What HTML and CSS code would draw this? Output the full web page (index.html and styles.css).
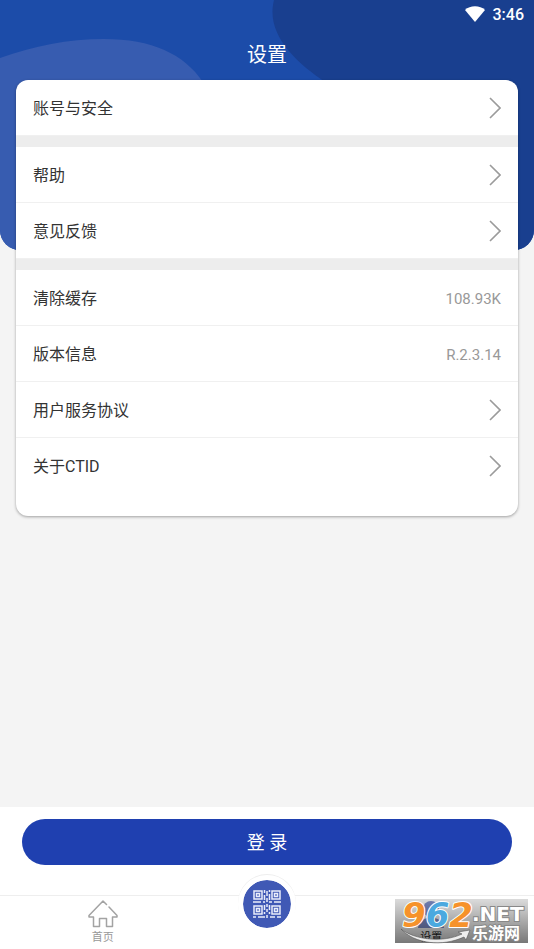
FILE: index.html
```html
<!DOCTYPE html>
<html lang="zh-CN">
<head>
<meta charset="utf-8">
<meta name="viewport" content="width=device-width, initial-scale=1">
<title>设置</title>
<link rel="stylesheet" href="styles.css">
</head>
<body>
<svg class="defs" aria-hidden="true">
  <symbol id="chevron" viewBox="0 0 12 22"><path d="M1 1 11 11 1 21" fill="none" stroke="#9b9b9b" stroke-width="1.6"/></symbol>
</svg>

<header class="hero">
  <svg class="hero-art" viewBox="0 0 534 250" preserveAspectRatio="none" aria-hidden="true">
    <path d="M0 58C34 46 68 39 104 39C152 39 184 54 203 82C222 112 210 170 230 250H0Z" fill="#375cb0"/>
    <path d="M274 0C269 20 277 36 288 50C300 64 312 73 325 82C360 108 400 170 410 250H534V0Z" fill="#193f8f"/>
  </svg>
  <div class="status">
    <svg class="wifi" viewBox="0 0 20 16" aria-label="Wi-Fi"><path d="M0 4C5-1 15-1 20 4L10 16Z" fill="#fff"/></svg>
    <time class="label">3:46</time>
  </div>
  <h1 class="title">设置</h1>
</header>

<main class="content">
  <div class="card">
    <ul class="group">
      <li><a class="row" href="#account"><span class="label">账号与安全</span><svg class="chevron"><use href="#chevron"/></svg></a></li>
    </ul>
    <ul class="group">
      <li><a class="row" href="#help"><span class="label">帮助</span><svg class="chevron"><use href="#chevron"/></svg></a></li>
      <li><a class="row" href="#feedback"><span class="label">意见反馈</span><svg class="chevron"><use href="#chevron"/></svg></a></li>
    </ul>
    <ul class="group">
      <li><a class="row" href="#cache"><span class="label">清除缓存</span><span class="label value">108.93K</span></a></li>
      <li><a class="row" href="#version"><span class="label">版本信息</span><span class="label value">R.2.3.14</span></a></li>
      <li><a class="row" href="#terms"><span class="label">用户服务协议</span><svg class="chevron"><use href="#chevron"/></svg></a></li>
      <li><a class="row" href="#about"><span class="label">关于CTID</span><svg class="chevron"><use href="#chevron"/></svg></a></li>
    </ul>
  </div>
</main>

<footer class="bottom">
  <div class="login-bar"><button class="login" type="button">登 录</button></div>
  <nav class="tabs">
    <a class="tab" href="#home">
      <svg class="tab-icon" viewBox="0 0 30 28" fill="none" stroke="#a3a3a3" stroke-width="1.5" stroke-linejoin="round" stroke-linecap="round" aria-hidden="true"><path d="M18.5 4.5 15 1 1 15.500V17H5.500V26.500H11.500V18.500H18.500V26.500H24.500V17H29V15.500L21 7"/></svg>
      <span>首页</span>
    </a>
    <a class="scan" href="#code" aria-label="二维码">
      <svg class="qr" viewBox="0 0 28 28" fill="none" stroke="#e9edfa" stroke-width="1.5" aria-hidden="true">
        <path d="M1 1H9V9H1ZM19 1H27V9H19ZM1 16H9V24H1ZM19 16H27V24H19Z"/>
        <path d="M3.500 3.500H6.500V6.500H3.500ZM21.500 3.500H24.500V6.500H21.500ZM3.500 18.500H6.500V21.500H3.500ZM21.500 18.500H24.500V21.500H21.500Z"/>
        <path d="M11.500 0V3M11.500 5V10M14 1V6M16.500 0V2M16.500 4V10M14 8V10M0 12H8M10 12H12M13 11H15M16 12H19M21 12H28M11.500 15V20M14 14V17M16.500 15V20M14 19V22M11.500 22V24M16.500 22V24M0 27H3M5 27H12M14 25V28M17 27H22M24 27H28"/>
      </svg>
    </a>
    <a class="tab tab-active" href="#settings">
      <svg class="tab-icon" viewBox="0 0 30 28" fill="#8492cf" aria-hidden="true"><circle cx="15" cy="9" r="8"/><path d="M2 28C3 14 27 14 28 28Z"/></svg>
      <span>设置</span>
    </a>
  </nav>
  <svg class="watermark" viewBox="0 0 133 44" role="img" aria-label="962.NET 乐游网">
    <defs><linearGradient id="shade" x2="0" y2="1"><stop stop-color="#000" stop-opacity=".14"/><stop offset="1" stop-color="#000" stop-opacity=".53"/></linearGradient></defs>
    <rect width="133" height="44" fill="url(#shade)"/>
    <path d="M6 30C20 41 48 44 67 35L63 33 75 31 71 41 69 38C47 48 20 45 6 30Z" fill="#eee" stroke="#555" stroke-width=".6"/>
    <text class="mark-number" x="7" y="28"><tspan class="orange">9</tspan><tspan class="blue">6</tspan><tspan class="orange">2</tspan></text>
    <text class="mark-net" x="77" y="22">.NET</text>
    <text class="mark-name" x="77" y="40">乐游网</text>
  </svg>
</footer>
</body>
</html>
```
FILE: styles.css
```css
* { box-sizing: border-box; }

body {
  margin: 0;
  min-height: 100vh;
  display: flex;
  flex-direction: column;
  background: #f4f4f4;
  color: #333;
  font: 16px/24px Roboto, "Noto Sans CJK SC", sans-serif;
}

a { color: inherit; text-decoration: none; }
ul { list-style: none; margin: 0; padding: 0; }
svg { display: block; flex: none; }
.defs { position: absolute; width: 0; height: 0; }

.hero {
  position: relative;
  height: 250px;
  overflow: hidden;
  border-radius: 0 0 20px 20px;
  background: #1c4ca9;
  color: #fff;
}
.hero-art { position: absolute; inset: 0; width: 100%; height: 100%; }
.status {
  position: relative;
  display: flex;
  justify-content: flex-end;
  align-items: center;
  gap: 8px;
  height: 28px;
  padding: 0 10px;
  font-weight: 500;
}
.wifi { width: 20px; height: 16px; }
.title {
  position: relative;
  margin: 0;
  font-size: 20px;
  font-weight: 400;
  line-height: 54px;
  text-align: center;
}

.content { flex: 1; margin-top: -170px; padding: 0 16px 24px; }
.card {
  position: relative;
  overflow: hidden;
  padding-bottom: 22px;
  border-radius: 12px;
  background: #fff;
  box-shadow: 0 1px 3px rgba(0, 0, 0, .35);
}
.group + .group { border-top: 11px solid #ededed; }
.row {
  display: flex;
  align-items: center;
  justify-content: space-between;
  height: 56px;
  padding: 0 17px;
  border-bottom: 1px solid #f0f0f0;
}
.group:last-child li:last-child .row { border-color: transparent; }
.label { padding-top: 2px; }
.chevron { width: 12px; height: 22px; }
.value { color: #999; font-size: 15px; }

.bottom { position: relative; background: #fff; }
.login-bar { padding: 12px 22px 30px; }
.login {
  display: block;
  width: 100%;
  height: 46px;
  padding: 2px 0 0;
  border: 0;
  border-radius: 23px;
  background: #1f40b0;
  color: #fff;
  font: inherit;
  font-size: 18px;
}
.tabs {
  display: grid;
  grid-template-columns: 5fr 3fr 5fr;
  height: 54px;
  border-top: 1px solid #eee;
}
.tab {
  display: flex;
  flex-direction: column;
  align-items: center;
  padding-top: 4px;
  color: #999;
  font-size: 11px;
  line-height: 20px;
}
.tab-icon { width: 30px; height: 28px; }
.tab-active { color: #222; }
.scan {
  justify-self: center;
  display: grid;
  place-items: center;
  width: 58px;
  height: 58px;
  margin-top: -21px;
  border: 5px solid #fff;
  border-radius: 50%;
  background: #4059b5;
  background-clip: padding-box;
  box-shadow: 0 -1px 0 #eee;
}
.qr { width: 28px; height: 28px; }

.watermark {
  position: absolute;
  right: 6px;
  bottom: 6px;
  width: 133px;
  height: 44px;
  overflow: visible;
}
.mark-number {
  font: italic 700 34px "DejaVu Sans", sans-serif;
  stroke: #fff;
  stroke-width: 2px;
  stroke-linejoin: round;
  paint-order: stroke;
}
.orange { fill: #f6922b; }
.blue { fill: #4ba9df; }
.mark-net, .mark-name {
  fill: #fff;
  stroke: #888;
  stroke-width: 2px;
  paint-order: stroke;
}
.mark-net { font: 700 20px "DejaVu Sans", sans-serif; }
.mark-name { font: 700 16px "Noto Sans CJK SC", sans-serif; }
```
